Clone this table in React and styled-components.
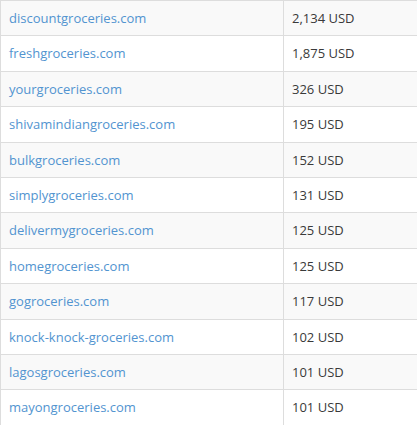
import React from 'react'
import styled, { createGlobalStyle } from 'styled-components'

const rows = [
  ['discountgroceries.com', '2,134 USD'],
  ['freshgroceries.com', '1,875 USD'],
  ['yourgroceries.com', '326 USD'],
  ['shivamindiangroceries.com', '195 USD'],
  ['bulkgroceries.com', '152 USD'],
  ['simplygroceries.com', '131 USD'],
  ['delivermygroceries.com', '125 USD'],
  ['homegroceries.com', '125 USD'],
  ['gogroceries.com', '117 USD'],
  ['knock-knock-groceries.com', '102 USD'],
  ['lagosgroceries.com', '101 USD'],
  ['mayongroceries.com', '101 USD'],
]

const GlobalStyle = createGlobalStyle`
  body {
    margin: 0;
    background: #fff;
    font-family: "Open Sans", "Liberation Sans", sans-serif;
    overflow: hidden;
  }
`

export default function App() {
  return (
    <Wrap>
      <GlobalStyle />
      <Table>
        <tbody>
          {rows.map(([site, price], i) => (
            <Row key={site} $striped={i % 2 === 0}>
              <Cell $first>
                <Link href="#">{site}</Link>
              </Cell>
              <Cell>{price}</Cell>
            </Row>
          ))}
        </tbody>
      </Table>
    </Wrap>
  )
}

const Wrap = styled.div`
  width: 417px;
  height: 425px;
  overflow: hidden;
`

const Table = styled.table`
  width: 440px;
  table-layout: fixed;
  border-collapse: collapse;
  border-left: 1px solid #ddd;
  font-size: 13px;
  color: #3a3a3a;
`

const Row = styled.tr`
  background: ${p => (p.$striped ? '#f9f9f9' : '#fff')};
`

const Cell = styled.td`
  padding: 8px 8px;
  line-height: 18.4px;
  border-top: 1px solid #ddd;
  border-left: 1px solid #ddd;
  width: ${p => (p.$first ? '266px' : 'auto')};
  vertical-align: top;
`

const Link = styled.a`
  color: #5294d0;
  text-decoration: none;
`
